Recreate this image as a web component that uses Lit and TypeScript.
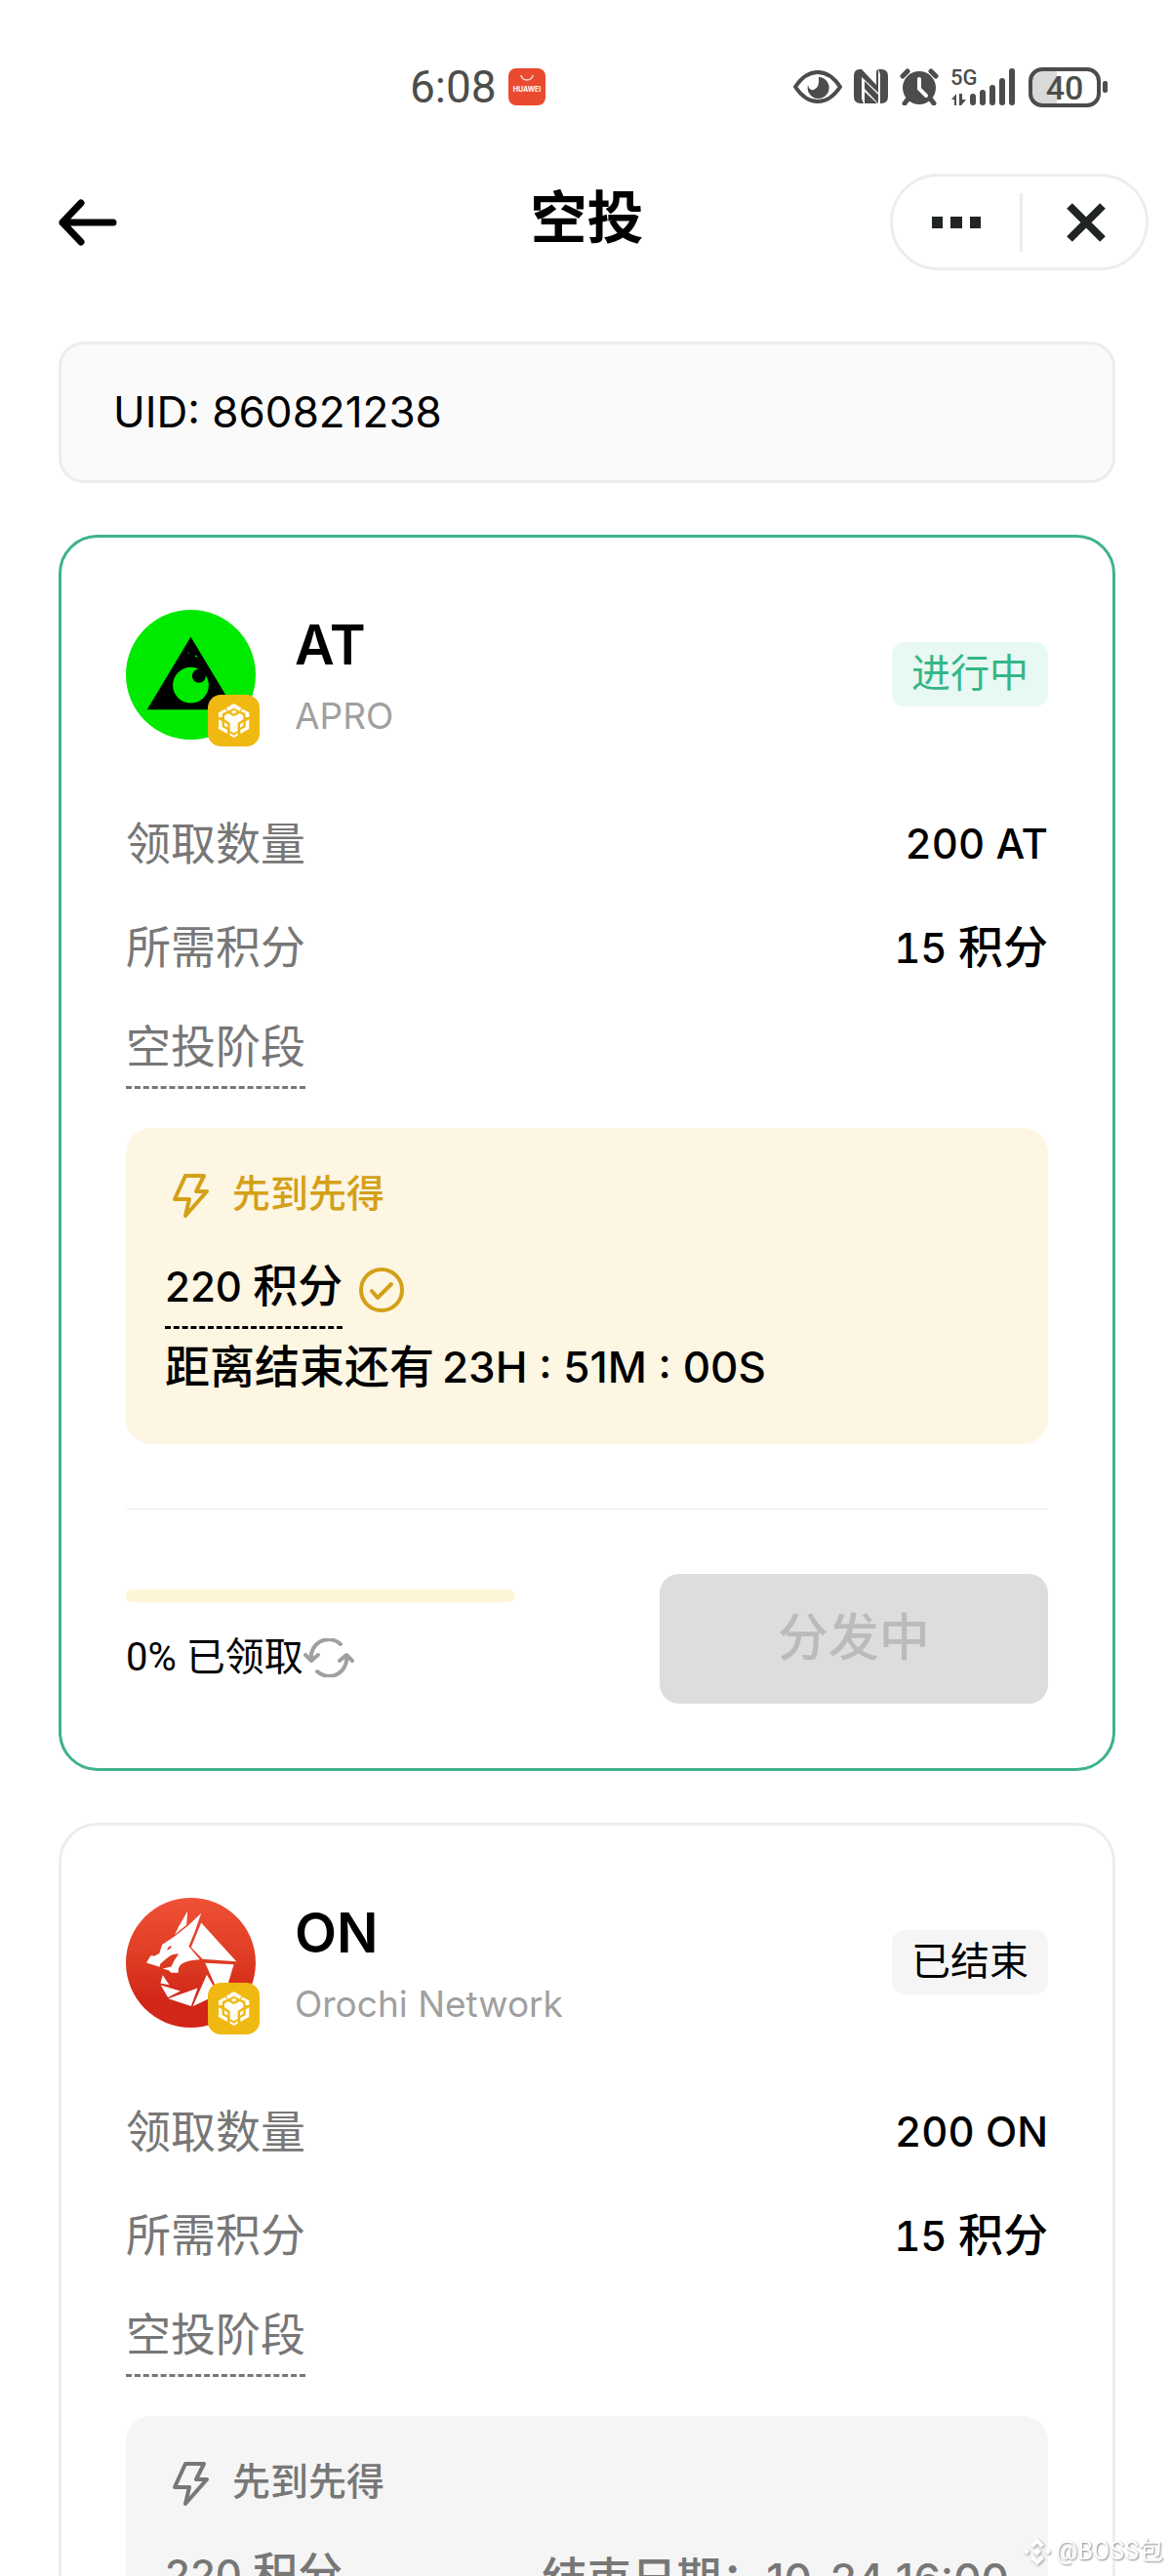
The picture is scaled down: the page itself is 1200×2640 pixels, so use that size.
import { LitElement, html, css, svg, nothing } from "lit";
import { customElement, property } from "lit/decorators.js";

interface Stage {
  title: string;
  points: number;
  qualified: boolean;
  note: string;
  time: string;
}

interface Airdrop {
  symbol: string;
  name: string;
  logo: "apro" | "orochi";
  active: boolean;
  status: string;
  amount: number;
  required: number;
  stage: Stage;
  claimed?: number;
  action?: string;
}

const airdrops: Airdrop[] = [
  {
    symbol: "AT",
    name: "APRO",
    logo: "apro",
    active: true,
    status: "进行中",
    amount: 200,
    required: 15,
    stage: {
      title: "先到先得",
      points: 220,
      qualified: true,
      note: "距离结束还有",
      time: "23H : 51M : 00S",
    },
    claimed: 0,
    action: "分发中",
  },
  {
    symbol: "ON",
    name: "Orochi Network",
    logo: "orochi",
    active: false,
    status: "已结束",
    amount: 200,
    required: 15,
    stage: {
      title: "先到先得",
      points: 220,
      qualified: false,
      note: "结束日期：",
      time: "10-24 16:00",
    },
  },
];

const aproLogo = html`<svg class="logo" viewBox="57 44 398 398" aria-hidden="true">
  <circle cx="256" cy="243" r="199" fill="#00ea00" />
  <path d="M256 127 390 350H122Z" fill="#000" />
  <circle cx="256" cy="275" r="55" fill="#00ea00" />
  <path d="M256 215a60 60 0 0 1 26 7l20 22-8-24-18-10Z" fill="#000" />
  <circle cx="281" cy="247" r="21" fill="#000" />
  <circle cx="273" cy="186" r="3" fill="#00ea00" />
  <circle cx="249" cy="176" r="2" fill="#00ea00" />
</svg>`;

const orochiLogo = html`<svg class="logo" viewBox="57 41 398 398" aria-hidden="true">
  <defs>
    <linearGradient id="ember" x1="0" y1="0" x2="0" y2="1">
      <stop offset="0" stop-color="#ef5136" />
      <stop offset="0.5" stop-color="#dd3a22" />
      <stop offset="0.8" stop-color="#d12618" />
    </linearGradient>
  </defs>
  <circle cx="256" cy="240" r="199" fill="url(#ember)" />
  <g fill="#fff">
    <path d="M246 82 243 124 207 153 220 127Z" />
    <path
      d="M288 88 269 143 250 190 284 230C258 231 238 236 226 245 219 252 217 260 218 271L196 271 188 263 170 258 196 252 206 232 219 213C204 212 192 217 184 225L163 243 160 253 120 240 133 218 146 219 160 211 168 185 205 160 246 128Z"
    />
    <path d="M288 117 396 236 292 229 257 193Z" />
    <path d="M300 241 388 245 368 312 330 308Z" />
    <path d="M305 277 326 312 312 350 262 374Z" />
    <path d="M277 318 257 373 187 350Z" />
    <path d="M170 278 190 308 163 303Z" />
    <path d="M164 309 224 327 186 346Z" />
  </g>
  <path d="M183 201Q186 190 197 188 195 200 183 201Z" fill="#dd3a22" />
</svg>`;

const chainBadge = html`<svg class="badge" viewBox="0 0 159 159" role="img" aria-label="BNB Chain">
  <rect width="159" height="159" rx="40" fill="#efb911" />
  <g fill="#fffdf3">
    <path d="M80 27 104 41 97 50 80 41 63 50 56 41Z" />
    <path d="M80 47 89 53 80 59 71 53Z" />
    <path d="M52 44 60 50 45 58 44 69 33 69 33 55Z" />
    <path d="M108 44 100 50 115 58 116 69 127 69 127 55Z" />
    <path
      d="M62 57 80 67 98 57 109 64 109 76 92 87 92 111 80 118 68 111 68 87 51 76 51 64Z"
    />
    <path d="M33 76 44 82 44 99 60 108 60 120 33 105Z" />
    <path d="M127 76 116 82 116 99 100 108 100 120 127 105Z" />
    <path d="M51 85 61 91 61 101 51 95Z" />
    <path d="M109 85 99 91 99 101 109 95Z" />
    <path d="M68 117 80 125 92 117 92 125 80 132 68 125Z" />
  </g>
</svg>`;

const boltIcon = html`<svg class="bolt" viewBox="0 0 53 53" aria-hidden="true">
  <path
    d="M21 7H40L32 23H43L21 48L25 31H10Z"
    fill="none"
    stroke="currentColor"
    stroke-width="4"
    stroke-linejoin="round"
  />
</svg>`;

const checkIcon = html`<svg class="check" viewBox="0 0 48 48" role="img" aria-label="已达标">
  <g fill="none" stroke="currentColor" stroke-width="4" stroke-linecap="round" stroke-linejoin="round">
    <circle cx="24" cy="24" r="21" />
    <path d="M14 25 20 32 34 18" />
  </g>
</svg>`;

const refreshIcon = html`<svg class="refresh-icon" viewBox="0 0 52 40" aria-hidden="true">
  <g fill="none" stroke="currentColor" stroke-width="4" stroke-linecap="round" stroke-linejoin="round">
    <path d="M38 6A18 18 0 0 0 8 22" />
    <path d="M2 17 8 23 15 17" />
    <path d="M14 34A18 18 0 0 0 44 18" />
    <path d="M37 23 44 17 50 23" />
  </g>
</svg>`;

const signalBars = [26, 22, 17, 10, 0].map(
  (top, i) => svg`<rect x=${i * 10} y=${top} width="6" height=${38 - top} rx="3" />`
);

@customElement("status-bar")
export class StatusBar extends LitElement {
  static styles = css`
    :host {
      display: flex;
      align-items: center;
      justify-content: space-between;
      height: 98px;
      padding: 40px 64px 0 35%;
      box-sizing: content-box;
      color: #4c4d4b;
      font-family: Roboto, sans-serif;
    }
    .clock,
    .icons {
      display: flex;
      align-items: center;
    }
    .clock {
      gap: 12px;
      font-size: 46px;
      line-height: 56px;
    }
    .icons {
      gap: 12px;
    }
    svg {
      display: block;
      fill: currentColor;
    }
    .network {
      font: 500 22px/24px Roboto, sans-serif;
    }
    .level {
      font: 500 34px/34px Roboto, sans-serif;
    }
    .store-name {
      font: 700 7px/7px Inter, sans-serif;
    }
  `;

  render() {
    return html`
      <div class="clock">
        <time>6:08</time>
        <svg width="38" height="38" viewBox="0 0 38 38">
          <rect width="38" height="38" rx="8" fill="#ea4a30" />
          <path d="M13 7a6 5 0 0 0 12 0" fill="none" stroke="#fbd9d0" stroke-width="1.5" />
          <text class="store-name" x="19" y="24" text-anchor="middle" fill="#fff">HUAWEI</text>
        </svg>
      </div>
      <div class="icons">
        <svg width="50" height="38" viewBox="0 0 50 38">
          <path
            d="M2 19Q12 4 25 4T48 19Q38 34 25 34T2 19Z"
            fill="none"
            stroke="currentColor"
            stroke-width="4"
          />
          <path d="M26 9A11 11 0 1 1 15 17Q16 23 21 22 27 20 26 9Z" />
        </svg>
        <svg width="35" height="38" viewBox="0 0 35 38">
          <path
            d="M7 1H6Q0 1 0 8V29Q0 36 7 36H10L8 31V1ZM28 36Q35 36 35 29V8Q35 1 28 1H25L27 6V36ZM8 1 23 17V3L25 1H25V25L8 9ZM11 13 25 27V36L11 21ZM11 24 24 36H11Z"
          />
        </svg>
        <svg width="40" height="38" viewBox="0 0 40 38">
          <circle cx="20" cy="20" r="17" />
          <g fill="none" stroke-linecap="round">
            <path
              d="M3 8 8 3M37 8 32 3M8 32 5 36M32 32 35 36"
              stroke="currentColor"
              stroke-width="5"
            />
            <path d="M20 11V21L27 28" stroke="#fff" stroke-width="4" />
          </g>
        </svg>
        <svg width="68" height="50" viewBox="0 -6 68 50">
          <text class="network" x="0" y="17">5G</text>
          <path d="M1 32 6 26V38H4V32ZM9 26V38L11 38 16 32H12V26Z" />
          <g transform="translate(20 0)">${signalBars}</g>
        </svg>
        <svg width="82" height="42" viewBox="0 0 82 42">
          <path d="M15 3H29V39H15Q3 39 3 27V15Q3 3 15 3Z" fill="#d9d9d9" />
          <rect
            x="2"
            y="3"
            width="70"
            height="37"
            rx="12"
            fill="none"
            stroke="currentColor"
            stroke-width="4"
          />
          <rect x="76" y="15" width="5" height="12" rx="2" />
          <text class="level" x="37" y="34" text-anchor="middle">40</text>
        </svg>
      </div>
    `;
  }
}

@customElement("airdrop-card")
export class AirdropCard extends LitElement {
  @property({ attribute: false }) item!: Airdrop;

  static styles = css`
    :host {
      display: block;
    }
    .card {
      padding: 67px 66px 66px;
      border: 3px solid #eceeed;
      border-radius: 40px;
      font-size: 46px;
      line-height: 66px;
    }
    .card.active {
      border-color: #3fb388;
    }
    .latin {
      font-family: Inter, sans-serif;
      font-size: 42px;
    }
    .head {
      display: flex;
      align-items: center;
      gap: 40px;
      margin-bottom: 68px;
    }
    .token {
      position: relative;
      flex: none;
      width: 133px;
      height: 133px;
    }
    .logo {
      display: block;
      width: 133px;
      height: 133px;
    }
    .badge {
      position: absolute;
      right: -4px;
      bottom: -7px;
      width: 53px;
      height: 53px;
    }
    .names {
      flex: 1;
      min-width: 0;
      font-family: Inter, sans-serif;
    }
    .symbol {
      margin: 0;
      font-size: 56px;
      font-weight: 600;
      line-height: 86px;
    }
    .name {
      margin: 0;
      color: #a0a0a0;
      font-size: 37px;
      line-height: 60px;
    }
    .status {
      padding: 0 20px;
      border-radius: 13px;
      background: #f5f5f5;
      font-size: 40px;
      line-height: 66px;
    }
    .active .status {
      background: #e8f9f3;
      color: #35b688;
    }
    .facts {
      display: grid;
      gap: 40px;
      margin: 0 0 40px;
    }
    .fact {
      display: flex;
      justify-content: space-between;
    }
    dt {
      color: #777;
    }
    dd {
      margin: 0;
      font-weight: 500;
      font-variant-numeric: tabular-nums;
    }
    .hint {
      border-bottom: 3px dashed currentColor;
      padding-bottom: 12px;
      line-height: 56px;
    }
    .stage {
      padding: 40px;
      border-radius: 26px;
      background: #f5f5f5;
      color: #777;
      font-weight: 500;
    }
    .active .stage {
      background: #fdf6e3;
      color: #000;
    }
    .stage time {
      font-size: 44px;
    }
    .stage-title {
      display: flex;
      align-items: center;
      gap: 16px;
      margin: 0 0 38px;
      font-size: 39px;
      font-weight: 500;
      line-height: 56px;
    }
    .active .stage-title,
    .check {
      color: #d4a017;
    }
    .bolt {
      width: 53px;
      height: 53px;
    }
    .score {
      display: flex;
      align-items: flex-start;
      justify-content: space-between;
    }
    .points {
      display: flex;
      align-items: flex-start;
      gap: 16px;
    }
    .check {
      width: 48px;
      height: 48px;
      margin-top: 8px;
    }
    .countdown {
      display: flex;
      align-items: baseline;
      gap: 8px;
      margin: 0;
      line-height: 78px;
    }
    .foot {
      display: grid;
      grid-template-columns: 1fr 1fr;
      align-items: center;
      gap: 148px;
      margin-top: 66px;
      padding-top: 66px;
      border-top: 1px solid #ececec;
    }
    .claim {
      display: grid;
      gap: 24px;
      padding-top: 2px;
      font-size: 40px;
    }
    .track {
      height: 13px;
      border-radius: 7px;
      background: #fef5d7;
      overflow: hidden;
    }
    .fill {
      height: 100%;
      background: #efb911;
    }
    .claimed {
      display: flex;
      align-items: center;
    }
    button {
      border: 0;
      padding: 0;
      font: inherit;
    }
    .refresh {
      background: none;
      color: #a0a0a0;
      line-height: 0;
    }
    .refresh-icon {
      width: 52px;
      height: 40px;
    }
    .action {
      height: 133px;
      border-radius: 20px;
      background: #ddd;
      color: #bbb;
      font-size: 52px;
      font-weight: 500;
    }
  `;

  private renderPoints(points: number) {
    return html`<span class="latin">${points}</span> 积分`;
  }

  private renderStage(stage: Stage) {
    const time = html`<time class="latin">${stage.time}</time>`;
    return html`
      <section class="stage">
        <h3 class="stage-title">${boltIcon}<span>${stage.title}</span></h3>
        <div class="score">
          <div class="points">
            <span class="hint">${this.renderPoints(stage.points)}</span>
            ${stage.qualified ? checkIcon : nothing}
          </div>
          ${stage.qualified ? nothing : html`<span>${stage.note}${time}</span>`}
        </div>
        ${stage.qualified
          ? html`<p class="countdown"><span>${stage.note}</span>${time}</p>`
          : nothing}
      </section>
    `;
  }

  render() {
    const { item } = this;
    return html`
      <article class="card ${item.active ? "active" : ""}">
        <header class="head">
          <div class="token">${item.logo === "apro" ? aproLogo : orochiLogo}${chainBadge}</div>
          <div class="names">
            <h2 class="symbol">${item.symbol}</h2>
            <p class="name">${item.name}</p>
          </div>
          <span class="status">${item.status}</span>
        </header>
        <dl class="facts">
          <div class="fact">
            <dt>领取数量</dt>
            <dd class="latin">${item.amount} ${item.symbol}</dd>
          </div>
          <div class="fact">
            <dt>所需积分</dt>
            <dd>${this.renderPoints(item.required)}</dd>
          </div>
          <div class="fact"><dt class="hint">空投阶段</dt></div>
        </dl>
        ${this.renderStage(item.stage)}
        ${item.action
          ? html`<footer class="foot">
              <div class="claim">
                <div
                  class="track"
                  role="progressbar"
                  aria-label="已领取"
                  aria-valuenow=${item.claimed ?? 0}
                >
                  <div class="fill" style="width:${item.claimed}%"></div>
                </div>
                <div class="claimed">
                  <span>${item.claimed}% 已领取</span>
                  <button class="refresh" aria-label="刷新">${refreshIcon}</button>
                </div>
              </div>
              <button class="action" disabled>${item.action}</button>
            </footer>`
          : nothing}
      </article>
    `;
  }
}

@customElement("app-root")
export class AppRoot extends LitElement {
  static styles = css`
    :host {
      display: flex;
      flex-direction: column;
      height: 100vh;
      overflow: hidden;
      background: #fff;
      color: #000;
      font-family: Roboto, "Noto Sans CJK SC", sans-serif;
    }
    .bar {
      display: grid;
      grid-template-columns: 1fr auto 1fr;
      align-items: center;
      flex: none;
      padding: 40px 57px 38px 60px;
    }
    h1 {
      margin: 0;
      padding-bottom: 8px;
      font-size: 58px;
      font-weight: 700;
      line-height: 84px;
    }
    button {
      display: flex;
      align-items: center;
      justify-content: center;
      border: 0;
      padding: 0;
      background: none;
      color: #202423;
    }
    .back {
      justify-self: start;
      color: #000;
    }
    .capsule {
      display: grid;
      grid-template-columns: 1fr 1fr;
      align-items: center;
      justify-self: end;
      width: 265px;
      height: 99px;
      box-sizing: border-box;
      margin-right: -34px;
      border: 3px solid #eceeed;
      border-radius: 50px;
    }
    .capsule button {
      height: 60px;
    }
    .capsule button + button {
      padding-left: 4px;
      border-left: 3px solid #ececec;
    }
    .content {
      display: flex;
      flex-direction: column;
      gap: 53px;
      flex: 1;
      min-height: 0;
      padding: 35px 57px 0 60px;
      overflow-y: auto;
      scrollbar-width: none;
    }
    .uid {
      flex: none;
      padding: 36px 53px;
      border: 3px solid #ededed;
      border-radius: 26px;
      background: #fafafa;
      font-family: Inter, sans-serif;
      font-size: 44px;
      line-height: 67px;
    }
    airdrop-card {
      flex: none;
    }
    .watermark {
      position: fixed;
      right: 8px;
      bottom: 8px;
      display: flex;
      align-items: center;
      gap: 4px;
      color: #fff;
      font-size: 25px;
      line-height: 34px;
      text-shadow: 1px 1px 2px #888;
    }
    .mark {
      width: 30px;
      height: 30px;
      fill: #fff;
      filter: drop-shadow(1px 1px 1px #999);
    }
  `;

  render() {
    return html`
      <status-bar></status-bar>
      <header class="bar">
        <button class="back" aria-label="返回">
          <svg width="60" height="48" viewBox="0 0 60 48">
            <path
              d="M56 24H4M23 4 4 24 23 44"
              fill="none"
              stroke="currentColor"
              stroke-width="7"
              stroke-linecap="round"
              stroke-linejoin="round"
            />
          </svg>
        </button>
        <h1>空投</h1>
        <div class="capsule">
          <button aria-label="更多">
            <svg width="52" height="12" viewBox="0 0 52 12">
              <path d="M1 0H12V12H1ZM20 0H32V12H20ZM40 0H51V12H40Z" fill="currentColor" />
            </svg>
          </button>
          <button aria-label="关闭">
            <svg width="42" height="42" viewBox="0 0 42 42">
              <path d="M4 4 38 38M38 4 4 38" stroke="currentColor" stroke-width="8" />
            </svg>
          </button>
        </div>
      </header>
      <main class="content">
        <div class="uid">UID: 860821238</div>
        ${airdrops.map((item) => html`<airdrop-card .item=${item}></airdrop-card>`)}
      </main>
      <div class="watermark">
        <svg class="mark" viewBox="0 0 30 30">
          <path
            d="M15 1 22 8 19 11 15 7 11 11 8 8ZM15 29 22 22 19 19 15 23 11 19 8 22ZM15 11 19 15 15 19 11 15ZM4 12 7 15 4 18 1 15ZM26 12 29 15 26 18 23 15Z"
          />
        </svg>
        <span>@BOSS包</span>
      </div>
    `;
  }
}
